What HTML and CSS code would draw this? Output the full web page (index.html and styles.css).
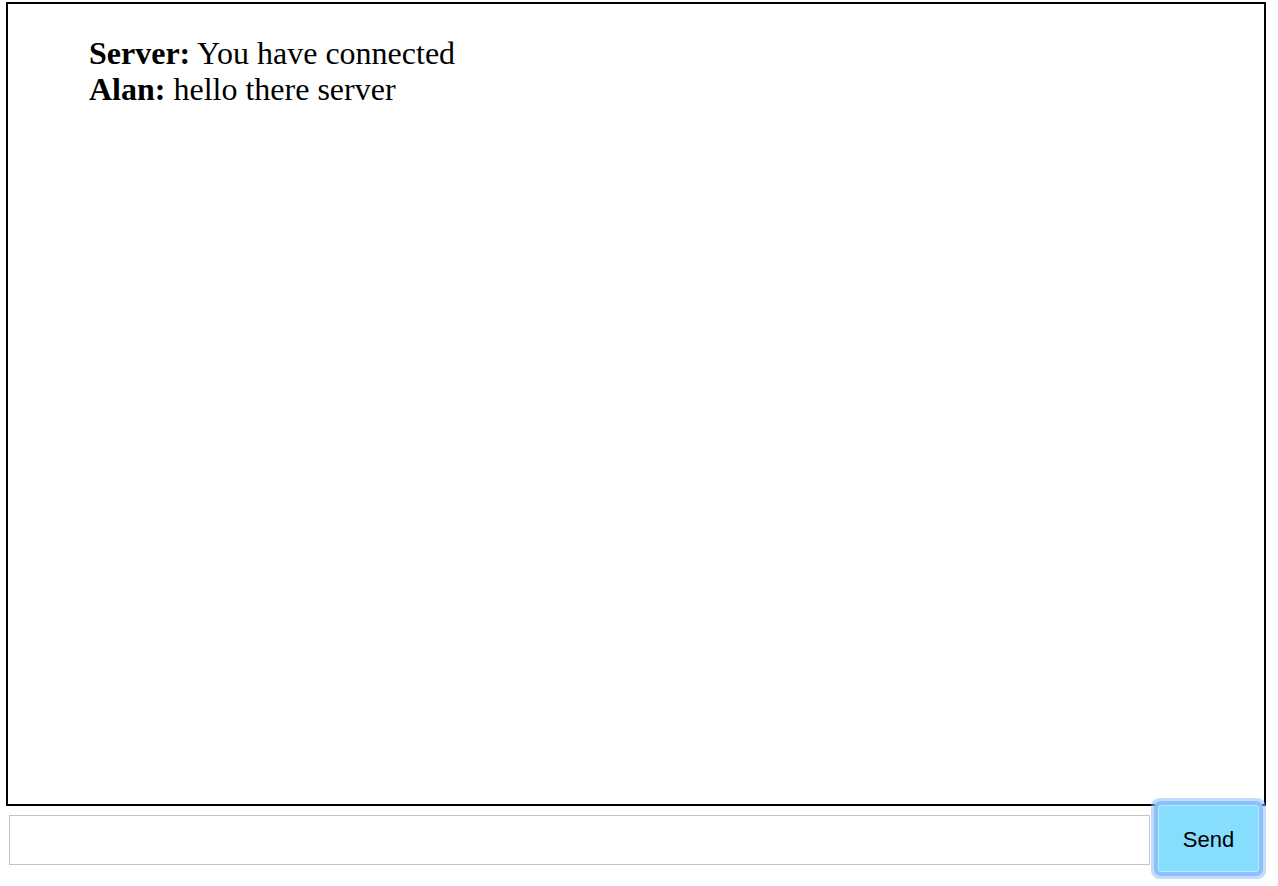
FILE: index.html
```html
<!DOCTYPE html>
<html>
<head>
<meta charset="utf-8">
<title>Chat</title>
<link rel="stylesheet" href="styles.css">
</head>
<body>
<div class="page">
  <div class="messages">
    <ul class="message-list">
      <li><b>Server:</b> You have connected</li>
      <li><b>Alan:</b> hello there server</li>
    </ul>
  </div>
  <form class="composer">
    <input class="composer-input" type="text">
    <button class="send-button" type="button">Send</button>
  </form>
</div>
</body>
</html>
```

FILE: styles.css
```css
html, body {
  margin: 0;
  padding: 0;
  background: #ffffff;
}

body {
  min-height: 886px;
}

.page {
  box-sizing: border-box;
  min-height: 886px;
  padding: 2px 0 14px 6px;
  font-family: "Liberation Serif", "Times New Roman", serif;
}

.messages {
  box-sizing: border-box;
  width: 1260px;
  height: 804px;
  border: 2px solid #000000;
  overflow: hidden;
}

.message-list {
  list-style: none;
  margin: 31px 0 0 0;
  padding: 0 0 0 81px;
  font-size: 32px;
  line-height: 36px;
  color: #000000;
}

.composer {
  display: flex;
  align-items: flex-start;
  margin: 0;
}

.composer-input {
  box-sizing: border-box;
  width: 1141px;
  height: 50px;
  margin: 9px 0 0 3px;
  padding: 0 6px;
  border: 1px solid #c4c4c4;
  background: #ffffff;
  font-size: 20px;
  outline: none;
}

.send-button {
  box-sizing: border-box;
  width: 101px;
  height: 67px;
  margin: -1px 0 0 8px;
  padding: 3px 0 0 0;
  border: 1px solid #b7ecff;
  border-radius: 3px;
  background: #87ddfd;
  color: #000000;
  font-family: "Liberation Sans", Arial, sans-serif;
  font-size: 22px;
  box-shadow: 0 0 0 4px #8cc0fa, 0 0 0 7px rgba(140, 192, 250, 0.55);
  cursor: pointer;
}
```
